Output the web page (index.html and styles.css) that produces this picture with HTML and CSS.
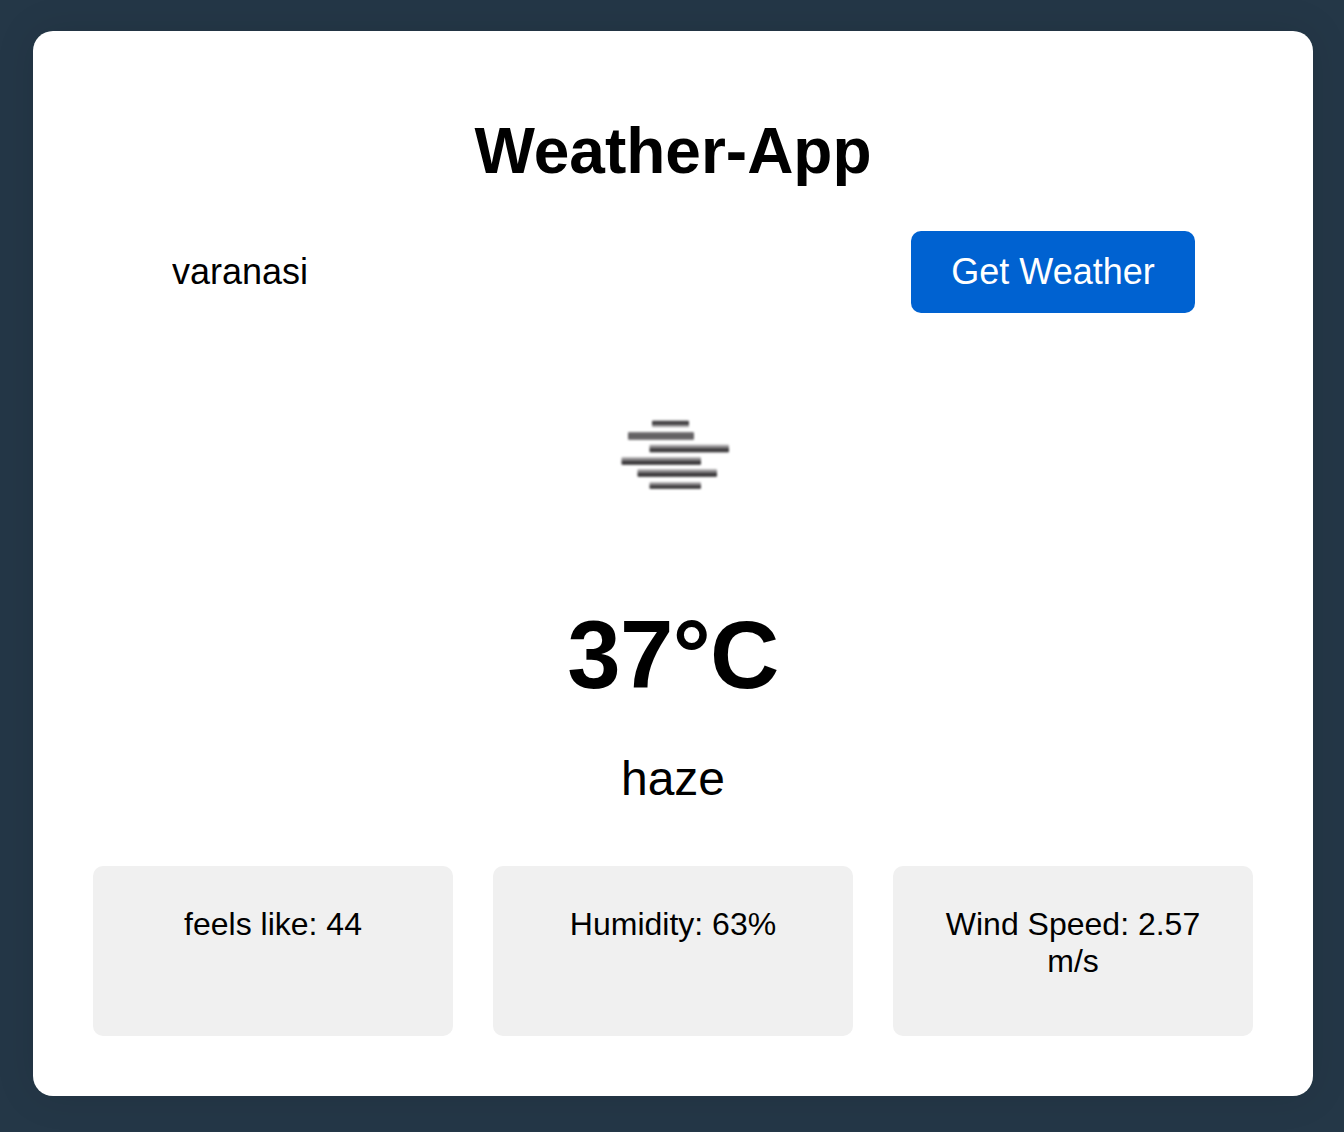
FILE: index.html
```html
<!DOCTYPE html>
<html lang="en">
<head>
<meta charset="utf-8">
<title>Weather-App</title>
<link rel="stylesheet" href="styles.css">
</head>
<body>
<main class="card">
  <h1 class="title">Weather-App</h1>
  <form class="search">
    <input class="city" type="text" value="varanasi" aria-label="City">
    <button class="submit" type="button">Get Weather</button>
  </form>
  <svg class="icon" viewBox="0 0 200 200" role="img" aria-label="haze">
    <defs>
      <linearGradient id="bar-top" x1="0" y1="0" x2="0" y2="1">
        <stop offset="0" stop-color="#777577"/>
        <stop offset="0.35" stop-color="#2c2a2c"/>
        <stop offset="0.65" stop-color="#777577"/>
        <stop offset="1" stop-color="#dddcdd"/>
      </linearGradient>
      <linearGradient id="bar-even" x1="0" y1="0" x2="0" y2="1">
        <stop offset="0" stop-color="#7c7a7c"/>
        <stop offset="0.5" stop-color="#5c5a5c"/>
        <stop offset="1" stop-color="#7c7a7c"/>
      </linearGradient>
      <linearGradient id="bar-low" x1="0" y1="0" x2="0" y2="1">
        <stop offset="0" stop-color="#c8c6c8"/>
        <stop offset="0.4" stop-color="#777577"/>
        <stop offset="0.7" stop-color="#2c2a2c"/>
        <stop offset="1" stop-color="#636163"/>
      </linearGradient>
    </defs>
    <g class="bars">
      <rect fill="url(#bar-top)" x="79" y="65.500" width="37" height="7" rx="1"/>
      <rect fill="url(#bar-even)" x="55" y="77" width="66" height="8" rx="1"/>
      <rect fill="url(#bar-low)" x="76.500" y="89.500" width="79.500" height="8" rx="1"/>
      <rect fill="url(#bar-low)" x="48.500" y="102" width="79.500" height="8" rx="1"/>
      <rect fill="url(#bar-low)" x="64.500" y="114" width="79.500" height="8" rx="1"/>
      <rect fill="url(#bar-low)" x="76.500" y="127" width="51.500" height="7" rx="1"/>
    </g>
  </svg>
  <p class="temperature">37°C</p>
  <p class="description">haze</p>
  <section class="details">
    <p class="detail">feels like: 44</p>
    <p class="detail">Humidity: 63%</p>
    <p class="detail">Wind Speed: 2.57 m/s</p>
  </section>
</main>
</body>
</html>
```
FILE: styles.css
```css
* { box-sizing: border-box; }

body {
  margin: 0;
  height: 1132px;
  padding: 31px 31px 36px 33px;
  background: #243747;
  font-family: Arial, "Liberation Sans", sans-serif;
  color: #000;
}

.card {
  height: 1065px;
  padding: 83px 60px 60px;
  border-radius: 20px;
  background: #fff;
  box-shadow: 0 0 40px rgba(0, 0, 0, 0.1);
  text-align: center;
}

.title {
  margin: 0 0 43px;
  font-size: 64px;
  line-height: 74px;
}

.search {
  display: flex;
  justify-content: space-between;
  height: 82px;
  margin: 0 58px;
}

.city {
  width: 680px;
  padding: 0 21px;
  border: 0;
  background: transparent;
  color: #000;
  font: 36px Arial, "Liberation Sans", sans-serif;
}

.submit {
  width: 284px;
  padding: 0;
  border: 0;
  border-radius: 10px;
  background: #0062d1;
  color: #fff;
  font: 36px Arial, "Liberation Sans", sans-serif;
}

.icon {
  display: block;
  width: 200px;
  height: 200px;
  margin: 42px auto 0;
}

.bars {
  filter: blur(1px);
}

.temperature {
  margin: 45px 0 0;
  font-size: 96px;
  font-weight: bold;
  line-height: 110px;
  letter-spacing: -0.8px;
}

.description {
  margin: 41px 0 0;
  font-size: 48px;
  line-height: 55px;
}

.details {
  display: grid;
  grid-template-columns: repeat(3, 1fr);
  gap: 40px;
  margin-top: 60px;
}

.detail {
  height: 170px;
  margin: 0;
  padding: 40px;
  border-radius: 10px;
  background: #f0f0f0;
  font-size: 32px;
  line-height: 37px;
}
```
